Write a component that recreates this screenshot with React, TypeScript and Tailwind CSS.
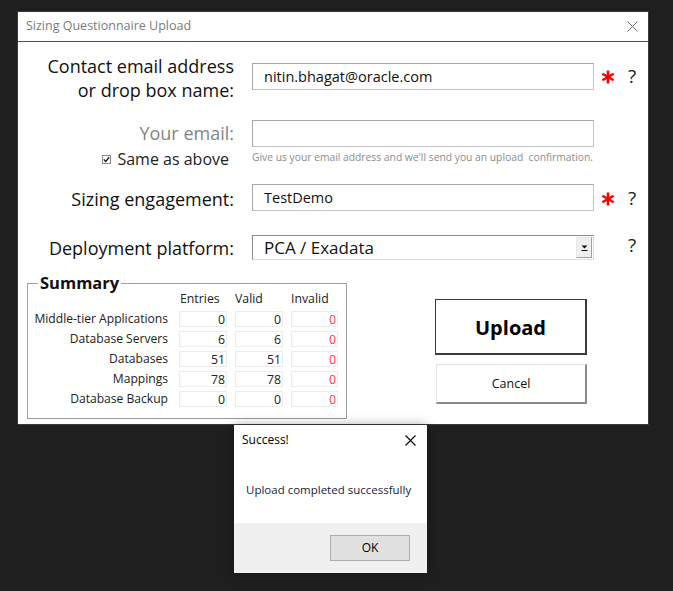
import React from "react";

const Asterisk = () => (
  <svg width="14" height="14" viewBox="0 0 14 14" className="block">
    <g stroke="#ff0000" strokeWidth="2.6" strokeLinecap="butt">
      <line x1="7" y1="0.5" x2="7" y2="13.5" />
      <line x1="1.4" y1="3.75" x2="12.6" y2="10.25" />
      <line x1="1.4" y1="10.25" x2="12.6" y2="3.75" />
    </g>
  </svg>
);

const Q = () => (
  <span className="block w-[12px] text-[19px] leading-[24px] text-[#222]">?</span>
);

const rows = [
  { label: "Middle-tier Applications", e: 0, v: 0, i: 0 },
  { label: "Database Servers", e: 6, v: 6, i: 0 },
  { label: "Databases", e: 51, v: 51, i: 0 },
  { label: "Mappings", e: 78, v: 78, i: 0 },
  { label: "Database Backup", e: 0, v: 0, i: 0 },
];

export default function App() {
  return (
    <div className="relative w-[673px] h-[591px] overflow-hidden bg-[#1f1f1f] font-['Open_Sans',sans-serif] text-[#111]">
      <div className="pt-[11px] pl-[17px]">
        <div className="w-[632px] border border-[#3a3a3a] bg-white">
          {/* title bar */}
          <div className="flex h-[30px] items-center justify-between border-b border-[#505050] pl-[8px] pr-[10px]">
            <span className="text-[12.5px] text-[#7b7b7b]">Sizing Questionnaire Upload</span>
            <svg width="11" height="11" viewBox="0 0 11 11">
              <path d="M0.5 0.5 L10.5 10.5 M10.5 0.5 L0.5 10.5" stroke="#6f6f6f" strokeWidth="1" />
            </svg>
          </div>
          {/* content */}
          <div className="h-[382px] pt-[12px]">
            {/* Row 1 */}
            <div className="flex items-start">
              <div className="w-[216px] text-right text-[18px] leading-[24px] text-[#111]">
                Contact email address
                <br />
                or drop box name:
              </div>
              <div className="ml-[18px] mt-[9px] flex h-[27px] w-[342px] items-center border border-[#a8a8a8] border-b-[#c4c4c4] border-r-[#c4c4c4] pl-[11px] text-[14.5px] text-[#111]">
                nitin.bhagat@oracle.com
              </div>
              <div className="ml-[7px] mt-[16px]">
                <Asterisk />
              </div>
              <div className="ml-[13px] mt-[10px]">
                <Q />
              </div>
            </div>
            {/* Row 2 */}
            <div className="mt-[18px] flex items-start">
              <div className="w-[216px] text-right">
                <div className="mt-[1px] text-[18px] leading-[24px] text-[#858585]">Your email:</div>
                <div className="mt-[4px] flex items-center justify-end pr-[5px] text-[16px] leading-[20px] text-[#222]">
                  <span className="mr-[6px] flex h-[9px] w-[9px] items-center justify-center border border-[#8a8a8a] bg-white">
                    <svg width="7" height="7" viewBox="0 0 7 7">
                      <path d="M0.8 3.4 L2.7 5.4 L6.2 1.2" stroke="#111" strokeWidth="1.3" fill="none" />
                    </svg>
                  </span>
                  Same as above
                </div>
              </div>
              <div className="ml-[18px]">
                <div className="h-[27px] w-[342px] border border-[#a8a8a8] border-b-[#c4c4c4] border-r-[#c4c4c4]" />
                <div className="mt-[3px] whitespace-pre text-[10.3px] leading-[14px] text-[#8c8c8c]">
                  {"Give us your email address and we'll send you an upload  confirmation."}
                </div>
              </div>
            </div>
            {/* Row 3 */}
            <div className="mt-[15px] flex items-start">
              <div className="mt-[3px] w-[216px] text-right text-[18px] leading-[24px] text-[#111]">
                Sizing engagement:
              </div>
              <div className="ml-[18px] flex h-[27px] w-[342px] items-center border border-[#a8a8a8] border-b-[#c4c4c4] border-r-[#c4c4c4] pl-[11px] text-[14.5px] text-[#111]">
                TestDemo
              </div>
              <div className="ml-[7px] mt-[8px]">
                <Asterisk />
              </div>
              <div className="ml-[13px] mt-[2px]">
                <Q />
              </div>
            </div>
            {/* Row 4 */}
            <div className="mt-[24px] flex items-start">
              <div className="mt-[1px] w-[216px] text-right text-[18px] leading-[24px] text-[#111]">
                Deployment platform:
              </div>
              <div className="ml-[18px] flex h-[25px] w-[342px] items-center justify-between border border-[#8a8a8a] border-b-[#e0e0e0] border-r-[#d8d8d8] pl-[11px] pr-[1px] text-[17px] text-[#111]">
                <span className="leading-[22px]">PCA / Exadata</span>
                <span className="flex h-[21px] w-[16px] flex-col items-center justify-center border border-[#a0a0a0] border-l-[#e8e8e8] border-t-[#e8e8e8] bg-[#efefef]">
                  <svg width="7" height="6" viewBox="0 0 7 6">
                    <path d="M0.5 0.5 H6.5 L3.5 3.5 Z" fill="#111" />
                    <rect x="0.5" y="5" width="6" height="1" fill="#111" />
                  </svg>
                </span>
              </div>
              <div className="ml-[34px] mt-[-2px]">
                <Q />
              </div>
            </div>
            {/* Bottom */}
            <div className="mt-[23px] flex items-start">
              <div className="relative ml-[9px] h-[136px] w-[320px] border border-[#a0a0a0] border-b-[#9a9a9a]">
                <span className="absolute left-[10px] top-[-11px] bg-white px-[2px] text-[16.5px] font-bold leading-[20px] text-[#111]">
                  Summary
                </span>
                <div className="pt-[7px]">
                  <div className="flex text-[12.3px] leading-[16px] text-[#222]">
                    <div className="w-[140px]" />
                    <div className="ml-[12px] w-[47px]">Entries</div>
                    <div className="ml-[8px] w-[48px]">Valid</div>
                    <div className="ml-[8px] w-[47px]">Invalid</div>
                  </div>
                  <div className="mt-[4px] flex flex-col gap-[4px]">
                    {rows.map((r) => (
                      <div key={r.label} className="flex text-[12.3px] leading-[16px] text-[#222]">
                        <div className="w-[140px] whitespace-nowrap text-right text-[12.1px]">{r.label}</div>
                        <div className="ml-[11px] h-[16px] w-[48px] border border-[#ececec] pr-[1px] text-right">{r.e}</div>
                        <div className="ml-[8px] h-[16px] w-[48px] border border-[#ececec] pr-[1px] text-right">{r.v}</div>
                        <div className="ml-[8px] h-[16px] w-[47px] border border-[#ececec] pr-[1px] text-right text-[#ff3b3b]">{r.i}</div>
                      </div>
                    ))}
                  </div>
                </div>
              </div>
              <div className="ml-[88px] flex flex-col">
                <div className="mt-[16px] flex h-[56px] w-[152px] items-center justify-center border border-[#3a3a3a] border-b-2 border-r-2 pt-[2px] text-[20px] font-bold text-[#000]">
                  Upload
                </div>
                <div className="ml-[1px] mt-[9px] flex h-[40px] w-[151px] items-center justify-center border border-[#e2e2e2] border-b-2 border-r-2 border-b-[#8a8a8a] border-r-[#8a8a8a] pt-[2px] text-[12.5px] text-[#111]">
                  Cancel
                </div>
              </div>
            </div>
          </div>
        </div>
      </div>

      {/* Success dialog */}
      <div className="absolute left-[234px] top-[425px] flex h-[148px] w-[193px] flex-col bg-white shadow-[0_0_10px_rgba(0,0,0,0.35)]">
        <div className="flex h-[30px] items-center justify-between pl-[8px] pr-[11px]">
          <span className="text-[12px] text-[#000]">Success!</span>
          <svg width="11" height="11" viewBox="0 0 11 11">
            <path d="M0.5 0.5 L10.5 10.5 M10.5 0.5 L0.5 10.5" stroke="#000" strokeWidth="1.1" />
          </svg>
        </div>
        <div className="flex h-[68px] items-center pl-[12px] pt-[2px] text-[11.5px] text-[#1a1a40]">
          Upload completed successfully
        </div>
        <div className="flex flex-1 items-start justify-end bg-[#f0f0f0] pr-[17px] pt-[12px]">
          <div className="flex h-[26px] w-[80px] items-center justify-center border border-[#adadad] bg-[#e1e1e1] text-[12px] text-[#000]">
            OK
          </div>
        </div>
      </div>
    </div>
  );
}
